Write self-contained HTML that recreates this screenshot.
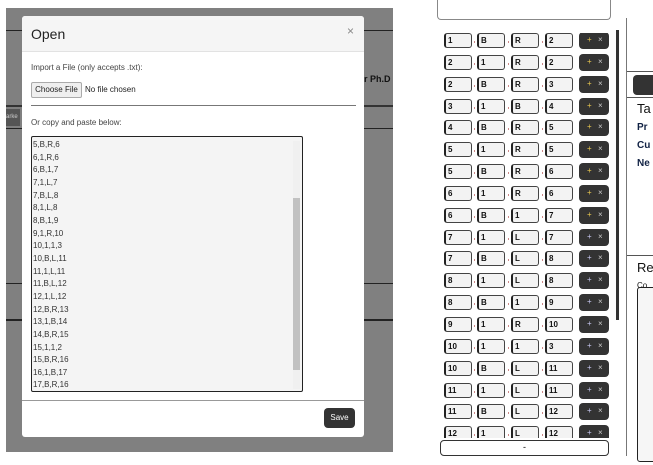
<!DOCTYPE html>
<html><head><meta charset="utf-8"><style>
*{box-sizing:border-box;margin:0;padding:0}
body{width:653px;height:465px;position:relative;background:#fff;font-family:"Liberation Sans",sans-serif;overflow:hidden}
.a{position:absolute}
.ov{left:6px;top:8px;width:387px;height:444px;background:#808080}
.ln{position:absolute;height:1px;background:#222}
.dlg{left:22px;top:16px;width:342px;height:421px;background:#fff;border-radius:3px;overflow:hidden}
.hd{height:36px;background:#f5f5f5;border-bottom:1px solid #e2e2e2;position:relative}
.hd b{position:absolute;left:9px;top:10px;font-weight:normal;font-size:14px;color:#222}
.hd i{position:absolute;right:10px;top:8px;font-style:normal;font-size:12px;color:#888}
.t{font-size:8px;color:#444}
.ta{left:9px;top:120px;width:272px;height:256px;border:1px solid #222;border-radius:2px;background:#f4f4f4;font-size:8px;line-height:12.65px;padding:2px 1px;color:#333}
.sb{position:absolute;right:2px;top:4px;width:7px;height:248px;background:#f0f0f0}
.th{position:absolute;right:2px;top:61px;width:7px;height:172px;background:#c1c1c1}
.save{left:302px;top:392px;width:31px;height:20px;background:#333;color:#fff;border-radius:4px;font-size:8px;text-align:center;line-height:20px}
.list{left:440px;top:33px;width:175px;height:405px;overflow:hidden}
.row{height:21.85px;position:relative}
.in{position:absolute;top:0;width:28px;height:15px;border:1px solid #444;border-left:2px solid #222;border-radius:3px;background:#f3f3f3;font-size:8px;font-weight:bold;padding-left:2px;line-height:13px;color:#111}
.bt{position:absolute;left:139px;top:-1px;width:30px;height:17px;background:#333;border-radius:4px;font-size:8px;color:#ccc}
.bt span{position:absolute;top:3px}
.dot{position:absolute;top:8px;width:1px;height:2px;background:#c88}
</style></head><body>
<div class="a" style="left:437px;top:0;width:174px;height:20px;border:1px solid #888;border-top:none;border-radius:0 0 4px 4px"></div>
<div class="a" style="left:616px;top:30px;width:3px;height:290px;background:#333"></div>
<div class="a" style="left:626px;top:18px;width:1px;height:438px;background:#777"></div>
<div class="a" style="left:627px;top:71px;width:26px;height:1px;background:#555"></div>
<div class="a" style="left:633px;top:75px;width:20px;height:20px;background:#333;border-radius:4px 0 0 4px"></div>
<div class="a" style="left:627px;top:97px;width:26px;height:1px;background:#555"></div>
<div class="a" style="left:637px;top:101px;font-size:13px;color:#111">Ta</div>
<div class="a" style="left:637px;top:122px;font-size:10px;font-weight:bold;color:#124">Pr</div>
<div class="a" style="left:637px;top:140px;font-size:10px;font-weight:bold;color:#124">Cu</div>
<div class="a" style="left:637px;top:158px;font-size:10px;font-weight:bold;color:#124">Ne</div>
<div class="a" style="left:627px;top:255px;width:26px;height:1px;background:#555"></div>
<div class="a" style="left:637px;top:260px;font-size:13px;color:#111">Re</div>
<div class="a" style="left:637px;top:281px;font-size:8px;color:#111">Co</div>
<div class="a" style="left:637px;top:287px;width:20px;height:175px;border:1px solid #222;border-radius:3px;background:#f6f6f6"></div>
<div class="a" style="left:440px;top:440px;width:169px;height:16px;border:1px solid #333;border-radius:4px;text-align:center;font-size:9px;line-height:12px">-</div>
<div class="a list">
<div class="row"><div class="in" style="left:4px">1</div><div class="dot" style="left:34px"></div><div class="in" style="left:37px">B</div><div class="dot" style="left:68px"></div><div class="in" style="left:71px">R</div><div class="dot" style="left:102px"></div><div class="in" style="left:105px">2</div><div class="bt"><span style="left:8px;color:#e8c850">+</span><span style="left:19px">×</span></div></div>
<div class="row"><div class="in" style="left:4px">2</div><div class="dot" style="left:34px"></div><div class="in" style="left:37px">1</div><div class="dot" style="left:68px"></div><div class="in" style="left:71px">R</div><div class="dot" style="left:102px"></div><div class="in" style="left:105px">2</div><div class="bt"><span style="left:8px;color:#e8c850">+</span><span style="left:19px">×</span></div></div>
<div class="row"><div class="in" style="left:4px">2</div><div class="dot" style="left:34px"></div><div class="in" style="left:37px">B</div><div class="dot" style="left:68px"></div><div class="in" style="left:71px">R</div><div class="dot" style="left:102px"></div><div class="in" style="left:105px">3</div><div class="bt"><span style="left:8px;color:#e8c850">+</span><span style="left:19px">×</span></div></div>
<div class="row"><div class="in" style="left:4px">3</div><div class="dot" style="left:34px"></div><div class="in" style="left:37px">1</div><div class="dot" style="left:68px"></div><div class="in" style="left:71px">B</div><div class="dot" style="left:102px"></div><div class="in" style="left:105px">4</div><div class="bt"><span style="left:8px;color:#e8c850">+</span><span style="left:19px">×</span></div></div>
<div class="row"><div class="in" style="left:4px">4</div><div class="dot" style="left:34px"></div><div class="in" style="left:37px">B</div><div class="dot" style="left:68px"></div><div class="in" style="left:71px">R</div><div class="dot" style="left:102px"></div><div class="in" style="left:105px">5</div><div class="bt"><span style="left:8px;color:#e8c850">+</span><span style="left:19px">×</span></div></div>
<div class="row"><div class="in" style="left:4px">5</div><div class="dot" style="left:34px"></div><div class="in" style="left:37px">1</div><div class="dot" style="left:68px"></div><div class="in" style="left:71px">R</div><div class="dot" style="left:102px"></div><div class="in" style="left:105px">5</div><div class="bt"><span style="left:8px;color:#e8c850">+</span><span style="left:19px">×</span></div></div>
<div class="row"><div class="in" style="left:4px">5</div><div class="dot" style="left:34px"></div><div class="in" style="left:37px">B</div><div class="dot" style="left:68px"></div><div class="in" style="left:71px">R</div><div class="dot" style="left:102px"></div><div class="in" style="left:105px">6</div><div class="bt"><span style="left:8px;color:#e8c850">+</span><span style="left:19px">×</span></div></div>
<div class="row"><div class="in" style="left:4px">6</div><div class="dot" style="left:34px"></div><div class="in" style="left:37px">1</div><div class="dot" style="left:68px"></div><div class="in" style="left:71px">R</div><div class="dot" style="left:102px"></div><div class="in" style="left:105px">6</div><div class="bt"><span style="left:8px;color:#e8c850">+</span><span style="left:19px">×</span></div></div>
<div class="row"><div class="in" style="left:4px">6</div><div class="dot" style="left:34px"></div><div class="in" style="left:37px">B</div><div class="dot" style="left:68px"></div><div class="in" style="left:71px">1</div><div class="dot" style="left:102px"></div><div class="in" style="left:105px">7</div><div class="bt"><span style="left:8px;color:#e8c850">+</span><span style="left:19px">×</span></div></div>
<div class="row"><div class="in" style="left:4px">7</div><div class="dot" style="left:34px"></div><div class="in" style="left:37px">1</div><div class="dot" style="left:68px"></div><div class="in" style="left:71px">L</div><div class="dot" style="left:102px"></div><div class="in" style="left:105px">7</div><div class="bt"><span style="left:8px;color:#c8c8f0">+</span><span style="left:19px">×</span></div></div>
<div class="row"><div class="in" style="left:4px">7</div><div class="dot" style="left:34px"></div><div class="in" style="left:37px">B</div><div class="dot" style="left:68px"></div><div class="in" style="left:71px">L</div><div class="dot" style="left:102px"></div><div class="in" style="left:105px">8</div><div class="bt"><span style="left:8px;color:#c8c8f0">+</span><span style="left:19px">×</span></div></div>
<div class="row"><div class="in" style="left:4px">8</div><div class="dot" style="left:34px"></div><div class="in" style="left:37px">1</div><div class="dot" style="left:68px"></div><div class="in" style="left:71px">L</div><div class="dot" style="left:102px"></div><div class="in" style="left:105px">8</div><div class="bt"><span style="left:8px;color:#c8c8f0">+</span><span style="left:19px">×</span></div></div>
<div class="row"><div class="in" style="left:4px">8</div><div class="dot" style="left:34px"></div><div class="in" style="left:37px">B</div><div class="dot" style="left:68px"></div><div class="in" style="left:71px">1</div><div class="dot" style="left:102px"></div><div class="in" style="left:105px">9</div><div class="bt"><span style="left:8px;color:#c8c8f0">+</span><span style="left:19px">×</span></div></div>
<div class="row"><div class="in" style="left:4px">9</div><div class="dot" style="left:34px"></div><div class="in" style="left:37px">1</div><div class="dot" style="left:68px"></div><div class="in" style="left:71px">R</div><div class="dot" style="left:102px"></div><div class="in" style="left:105px">10</div><div class="bt"><span style="left:8px;color:#c8c8f0">+</span><span style="left:19px">×</span></div></div>
<div class="row"><div class="in" style="left:4px">10</div><div class="dot" style="left:34px"></div><div class="in" style="left:37px">1</div><div class="dot" style="left:68px"></div><div class="in" style="left:71px">1</div><div class="dot" style="left:102px"></div><div class="in" style="left:105px">3</div><div class="bt"><span style="left:8px;color:#c8c8f0">+</span><span style="left:19px">×</span></div></div>
<div class="row"><div class="in" style="left:4px">10</div><div class="dot" style="left:34px"></div><div class="in" style="left:37px">B</div><div class="dot" style="left:68px"></div><div class="in" style="left:71px">L</div><div class="dot" style="left:102px"></div><div class="in" style="left:105px">11</div><div class="bt"><span style="left:8px;color:#c8c8f0">+</span><span style="left:19px">×</span></div></div>
<div class="row"><div class="in" style="left:4px">11</div><div class="dot" style="left:34px"></div><div class="in" style="left:37px">1</div><div class="dot" style="left:68px"></div><div class="in" style="left:71px">L</div><div class="dot" style="left:102px"></div><div class="in" style="left:105px">11</div><div class="bt"><span style="left:8px;color:#c8c8f0">+</span><span style="left:19px">×</span></div></div>
<div class="row"><div class="in" style="left:4px">11</div><div class="dot" style="left:34px"></div><div class="in" style="left:37px">B</div><div class="dot" style="left:68px"></div><div class="in" style="left:71px">L</div><div class="dot" style="left:102px"></div><div class="in" style="left:105px">12</div><div class="bt"><span style="left:8px;color:#c8c8f0">+</span><span style="left:19px">×</span></div></div>
<div class="row"><div class="in" style="left:4px">12</div><div class="dot" style="left:34px"></div><div class="in" style="left:37px">1</div><div class="dot" style="left:68px"></div><div class="in" style="left:71px">L</div><div class="dot" style="left:102px"></div><div class="in" style="left:105px">12</div><div class="bt"><span style="left:8px;color:#c8c8f0">+</span><span style="left:19px">×</span></div></div>
</div>

<div class="a ov">
<div class="ln" style="left:0;top:22px;width:387px"></div>
<div class="ln" style="left:0;top:97px;width:387px;height:2px;background:#333"></div>
<div class="ln" style="left:0;top:120px;width:387px"></div>
<div class="ln" style="left:0;top:275px;width:387px"></div>
<div class="ln" style="left:0;top:311px;width:387px;height:2px"></div>
<div style="position:absolute;left:358px;top:66px;font-size:9px;font-weight:bold;color:#111">r Ph.D</div>
<div style="position:absolute;left:0;top:101px;width:14px;height:17px;background:#555;font-size:6px;color:#ccc;line-height:17px">arke</div>
</div>
<div class="a dlg">
<div class="hd"><b>Open</b><i>×</i></div>
<div class="a t" style="left:9px;top:47px">Import a File (only accepts .txt):</div>
<div class="a" style="left:9px;top:66px;width:51px;height:16px;border:1px solid #aaa;background:#efefef;border-radius:2px;font-size:8px;color:#222;text-align:center;line-height:14px">Choose File</div>
<div class="a" style="left:63px;top:69px;font-size:8px;color:#222">No file chosen</div>
<div class="a" style="left:9px;top:89px;width:325px;height:1px;background:#777"></div>
<div class="a t" style="left:9px;top:102px">Or copy and paste below:</div>
<div class="a ta"><div class="sb"></div><div class="th"></div>
5,B,R,6<br>6,1,R,6<br>6,B,1,7<br>7,1,L,7<br>7,B,L,8<br>8,1,L,8<br>8,B,1,9<br>9,1,R,10<br>10,1,1,3<br>10,B,L,11<br>11,1,L,11<br>11,B,L,12<br>12,1,L,12<br>12,B,R,13<br>13,1,B,14<br>14,B,R,15<br>15,1,1,2<br>15,B,R,16<br>16,1,B,17<br>17,B,R,16</div>
<div class="a" style="left:0;top:384px;width:342px;height:1px;background:#999"></div>
<div class="a save">Save</div>
</div>
</body></html>
